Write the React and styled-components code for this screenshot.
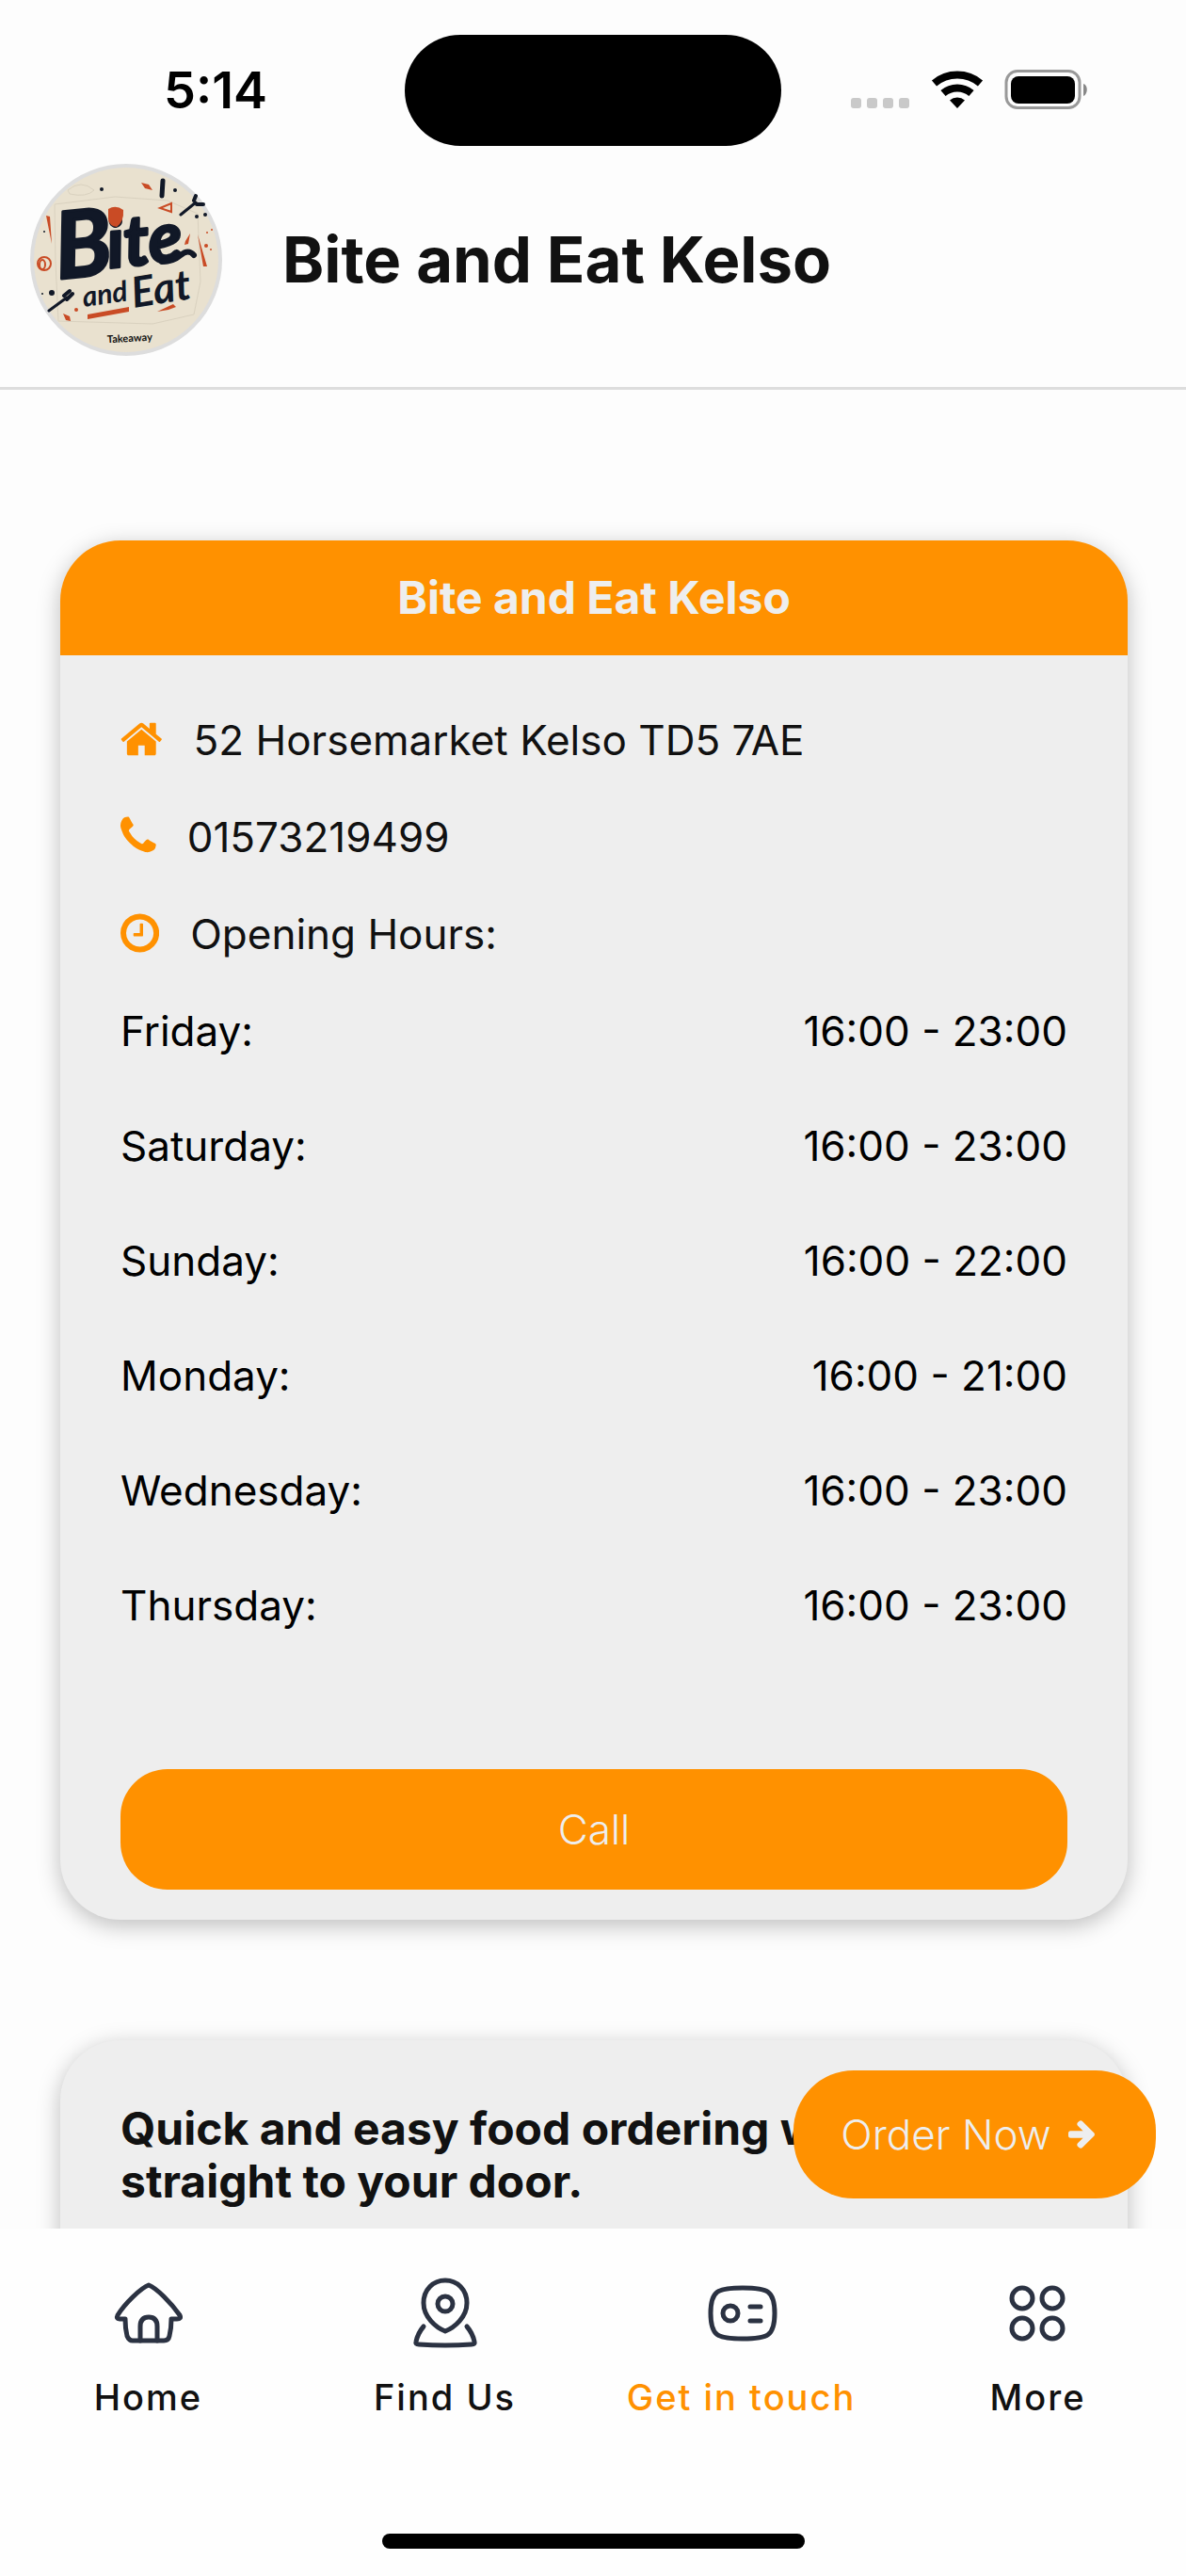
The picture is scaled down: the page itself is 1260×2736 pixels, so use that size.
import React from 'react';
import styled, { createGlobalStyle } from 'styled-components';

const GlobalStyle = createGlobalStyle`
    * {
        box-sizing: border-box;
    }

    body {
        margin: 0;
        background: #fdfdfd;
        color: #111;
        font-family: Inter, 'Liberation Sans', sans-serif;
    }
`;

const Screen = styled.div`
    display: flex;
    flex-direction: column;
    height: 100vh;
    overflow: hidden;
`;

const StatusBar = styled.div`
    display: grid;
    grid-template-columns: 1fr 400px 1fr;
    align-items: center;
    flex: none;
    height: 174px;
    padding: 37px 0 19px;
`;

const Clock = styled.time`
    padding-left: 174px;
    color: #000;
    font-size: 54px;
    font-weight: 600;
    line-height: 64px;
`;

const Island = styled.div`
    height: 118px;
    border-radius: 59px;
    background: #000;
`;

const StatusIcons = styled.div`
    display: flex;
    align-items: center;
    justify-content: flex-end;
    padding: 0 104px 2px 0;
`;

const Header = styled.header`
    display: flex;
    align-items: center;
    flex: none;
    gap: 64px;
    height: 240px;
    padding: 0 32px 33px;
    border-bottom: 3px solid #ddd;
`;

const Logo = styled.svg`
    flex: none;
    width: 204px;
    height: 204px;
`;

const Title = styled.h1`
    margin: 0;
    font-size: 67px;
    font-weight: 700;
    line-height: 84px;
`;

const Content = styled.main`
    position: relative;
    display: flex;
    flex-direction: column;
    flex: 1;
    min-height: 0;
    gap: 128px;
    padding: 160px 62px 0 64px;
    overflow: hidden;
`;

const Card = styled.section`
    flex: none;
    border-radius: 64px;
    background: #eee;
    box-shadow: 0 6px 24px rgba(0, 0, 0, 0.26);
`;

const CardTitle = styled.h2`
    margin: 0;
    border-radius: 64px 64px 0 0;
    background: #ff9100;
    color: #eee;
    font-size: 48px;
    font-weight: 700;
    line-height: 122px;
    text-align: center;
`;

const CardBody = styled.div`
    padding: 39px 64px 32px;
`;

const InfoRow = styled.div`
    display: flex;
    align-items: center;
    gap: 33px;
    font-size: 44px;
    line-height: 103px;

    svg {
        margin-bottom: 4px;
    }
`;

const FaIcon = styled.svg`
    flex: none;
    height: ${(props) => props.$size || 48}px;
    fill: ${(props) => props.$color || '#ff9100'};
`;

const HoursTable = styled.table`
    width: 100%;
    margin-bottom: 103px;
    border-collapse: collapse;
    color: #000;
    font-size: 44px;
    line-height: 102px;

    th,
    td {
        padding: 0 0 20px;
        font-weight: 400;
        text-align: left;
    }

    td {
        text-align: right;
    }
`;

const CallButton = styled.button`
    display: block;
    width: 100%;
    height: 128px;
    border: none;
    border-radius: 50px;
    background: #ff9100;
    color: #eee;
    font-family: inherit;
    font-size: 44px;
    font-weight: 300;
`;

const Promo = styled.p`
    margin: 0;
    padding: 66px 64px 128px;
    font-size: 48px;
    font-weight: 700;
    line-height: 56px;
`;

const OrderButton = styled.button`
    position: absolute;
    right: 32px;
    bottom: 32px;
    display: flex;
    align-items: center;
    justify-content: center;
    gap: 18px;
    width: 385px;
    height: 136px;
    padding: 0 20px 0 6px;
    border: none;
    border-radius: 64px;
    background: #ff9100;
    color: #eee;
    font-family: inherit;
    font-size: 44px;
    font-weight: 300;
`;

const TabBar = styled.nav`
    display: grid;
    grid-template-columns: repeat(4, 1fr);
    flex: none;
    height: 369px;
    background: #fefefe;
`;

const Tab = styled.a`
    display: flex;
    flex-direction: column;
    align-items: center;
    padding-top: 47px;
    color: ${(props) => (props.$active ? '#ff9100' : '#111')};
    font-size: 38px;
    font-weight: 500;
    letter-spacing: 2px;
    line-height: 46px;
    text-decoration: none;

    svg {
        width: 84px;
        height: 84px;
        margin-bottom: 25px;
        fill: none;
        stroke: #2b3242;
        stroke-width: 5;
        stroke-linecap: round;
        stroke-linejoin: round;
    }
`;

const HomeIndicator = styled.div`
    grid-column: 1 / -1;
    align-self: end;
    justify-self: center;
    width: 449px;
    height: 16px;
    margin-bottom: 29px;
    border-radius: 8px;
    background: #000;
`;

const hours = [
    ['Friday:', '16:00 - 23:00'],
    ['Saturday:', '16:00 - 23:00'],
    ['Sunday:', '16:00 - 22:00'],
    ['Monday:', '16:00 - 21:00'],
    ['Wednesday:', '16:00 - 23:00'],
    ['Thursday:', '16:00 - 23:00'],
];

const HomeSolid = () => (
    <FaIcon viewBox="0 0 1664 1792">
        <path d="M1408 992v480q0 26-19 45t-45 19h-384v-384h-256v384h-384q-26 0-45-19t-19-45v-480q0-1 .5-3t.5-3l575-474 575 474q1 2 1 6zm223-69l-62 74q-8 9-21 11h-3q-13 0-21-7l-692-577-692 577q-12 8-24 7-13-2-21-11l-62-74q-8-10-7-23.5t11-21.5l719-599q32-26 76-26t76 26l244 204v-195q0-14 9-23t23-9h192q14 0 23 9t9 23v408l219 182q10 8 11 21.5t-7 23.5z" />
    </FaIcon>
);

const PhoneSolid = () => (
    <FaIcon viewBox="0 0 1408 1792">
        <path d="M1408 1240q0 27-10 70.5t-21 68.5q-21 50-122 106-94 51-186 51-27 0-52.5-3.5t-57.5-12.5-47.5-14.5-55.5-20.5-49-18q-98-35-175-83-128-79-264.5-215.5t-215.5-264.5q-48-77-83-175-3-9-18-49t-20.5-55.5-14.5-47.5-12.5-57.5-3.5-52.5q0-92 51-186 56-101 106-122 25-11 68.5-21t70.5-10q14 0 21 3 18 6 53 76 11 19 30 54t35 63.5 31 53.5q3 4 17.5 25t21.5 35.5 7 28.5q0 20-28.5 50t-62 55-62 53-28.5 46q0 9 5 22.5t8.5 20.5 14 24 11.5 19q76 137 174 235t235 174q2 1 19 11.5t24 14 20.5 8.5 22.5 5q18 0 46-28.5t53-62 55-62 50-28.5q14 0 28.5 7t35.5 21.5 25 17.5q25 15 53.5 31t63.5 35 54 30q70 35 76 53 3 7 3 21z" />
    </FaIcon>
);

const ClockOutline = () => (
    <FaIcon viewBox="0 0 1536 1792">
        <path d="M896 544v448q0 14-9 23t-23 9h-320q-14 0-23-9t-9-23v-64q0-14 9-23t23-9h224v-352q0-14 9-23t23-9h64q14 0 23 9t9 23zm416 352q0-148-73-273t-198-198-273-73-273 73-198 198-73 273 73 273 198 198 273 73 273-73 198-198 73-273zm224 0q0 209-103 385.5t-279.5 279.5-385.5 103-385.5-103-279.5-279.5-103-385.5 103-385.5 279.5-279.5 385.5-103 385.5 103 279.5 279.5 103 385.5z" />
    </FaIcon>
);

const ArrowRight = () => (
    <FaIcon viewBox="0 64 1536 1792" $size={34} $color="#eee">
        <path d="M1472 960q0 54-37 91l-651 651q-39 37-91 37-51 0-90-37l-75-75q-38-38-38-91t38-91l293-293h-704q-52 0-84.5-37.5t-32.5-90.5v-128q0-53 32.5-90.5t84.5-37.5h704l-293-294q-38-36-38-90t38-90l75-75q38-38 90-38 53 0 91 38l651 651q37 35 37 90z" />
    </FaIcon>
);

const SignalIcons = () => (
    <svg width="252" height="44" viewBox="0 0 252 44">
        <g fill="#c9c9c9">
            <rect x="0" y="31" width="11" height="11" rx="3" />
            <rect x="17" y="31" width="11" height="11" rx="3" />
            <rect x="34" y="31" width="11" height="11" rx="3" />
            <rect x="51" y="31" width="11" height="11" rx="3" />
        </g>
        <g fill="none" stroke="#000" strokeWidth="8">
            <path d="M88.500 15.500a38 38 0 0 1 49 0" />
            <path d="M98 26a23 23 0 0 1 30 0" />
        </g>
        <path d="M113 42l-8-8.500a12 12 0 0 1 16 0z" />
        <rect x="165" y="2.500" width="78" height="39" rx="12" fill="none" stroke="#999" strokeWidth="3" />
        <rect x="170" y="8" width="68" height="29" rx="8" />
        <path d="M247 16c5 1 5 11 0 13z" fill="#888" />
    </svg>
);

const BrandLogo = () => (
    <Logo viewBox="0 0 204 204">
        <circle cx="102" cy="102" r="100" fill="#e9e1cf" stroke="#ddd" strokeWidth="4" />
        <g fill="none" stroke="#d9d1bf" strokeWidth="1">
            <path d="M40 28q14-12 28 0q-8 8-26 4zM26 43l64-8 56 4 32 14 3 72-7 35-44 10-100-3-3-62z" />
        </g>
        <g fill="#111827" fontFamily="Lato, sans-serif" fontStyle="italic" fontWeight="700">
            <g stroke="#111827" strokeWidth="3" strokeLinejoin="round" transform="rotate(-6 34 124)">
                <text x="30" y="122" fontSize="98">
                    B
                </text>
                <text x="85" y="116" fontSize="74">
                    ite
                </text>
            </g>
            <text x="57" y="152" fontSize="30" transform="rotate(-8 57 152)">
                and
            </text>
            <text x="110" y="153" fontSize="45" transform="rotate(-9 110 153)">
                Eat
            </text>
        </g>
        {/* swash under the name */}
        <path
            d="M140 104q12 0 20-7q8-7 14 0"
            fill="none"
            stroke="#111827"
            strokeWidth="6"
            strokeLinecap="round"
        />
        <g fill="none" stroke="#111827" strokeLinecap="round">
            <path d="M20 156l19-14M160 54l16-13" strokeWidth="3" />
            <path d="M141 18l-1 16" strokeWidth="5" />
            <path d="M36 140l6-5M39 144l6-6M174 39l2-5M177 43l7 0" strokeWidth="4" />
        </g>
        <g fill="#111827">
            <circle cx="76" cy="27" r="2" />
            <circle cx="154" cy="28" r="2" />
            <circle cx="177" cy="56" r="2" />
            <circle cx="186" cy="54" r="2" />
            <circle cx="23" cy="137" r="3" />
            <circle cx="13" cy="138" r="1" />
            <circle cx="15" cy="72" r="1" />
        </g>
        <g fill="#c94b25">
            <path d="M83 48q8-5 16 1q1 12-7 18q-8-1-9-8z" />
            <path d="M61 160l44-8v5l-44 8z" />
            <path d="M118 20l8 2 4 6-8-2zM135 157l17-8 3 3-8 3zM17 55l4 1 2 29zM178 75l10 34-4 0zM165 82l5-8-2 11-4 1zM35 159l7 3 1 5-5-1z" />
            <circle cx="49" cy="155" r="2" />
            <circle cx="188" cy="73" r="1" />
            <circle cx="193" cy="70" r="1" />
            <circle cx="187" cy="87" r="2" />
            <circle cx="192" cy="91" r="1" />
        </g>
        <g fill="none" stroke="#c94b25" strokeWidth="2">
            <path d="M138 47l12-5 0 9z" />
            <ellipse cx="15" cy="106" rx="7" ry="7" />
            <ellipse cx="13" cy="107" rx="3" ry="5" />
        </g>
        <text
            x="106"
            y="189"
            fill="#111"
            fontFamily="Lato, sans-serif"
            fontSize="11"
            fontWeight="700"
            textAnchor="middle"
            transform="rotate(-3 106 189)"
        >
            Takeaway
        </text>
    </Logo>
);

const TabHome = () => (
    <svg viewBox="0 0 84 84">
        <path d="M42 13C34 16 17 32 9 45q-2 4 2 4h6q0 10 2 18q2 5 6 5h33q5 0 6-5q2-8 2-18h6q5 0 3-4C66 32 50 16 42 13z" />
        <path d="M33 72V57q0-10 9-10t9 10v15" />
    </svg>
);

const TabPin = () => (
    <svg viewBox="0 0 84 84">
        <path d="M42 8c-13 0-23 10-23 24c0 15 13 26 23 30c10-4 23-15 23-30c0-14-10-24-23-24z" />
        <circle cx="42" cy="33" r="8" />
        <path d="M19 57q-6 7-8 16q-1 3 3 3q28 2 56 0q4 0 3-3q-2-9-8-16" />
    </svg>
);

const TabContact = () => (
    <svg viewBox="0 0 84 84">
        <path d="M43 16c27 0 34 3 34 27s-7 27-34 27S9 67 9 43S16 16 43 16z" />
        <circle cx="30" cy="43" r="8" />
        <path d="M51 36h11M51 51h11" />
    </svg>
);

const TabMore = () => (
    <svg viewBox="0 0 84 84">
        <circle cx="25" cy="27" r="11" />
        <circle cx="57" cy="27" r="11" />
        <circle cx="25" cy="59" r="11" />
        <circle cx="57" cy="59" r="11" />
    </svg>
);

const tabs = [
    { label: 'Home', Icon: TabHome },
    { label: 'Find Us', Icon: TabPin },
    { label: 'Get in touch', Icon: TabContact, active: true },
    { label: 'More', Icon: TabMore },
];

const App = () => {
    return (
        <Screen>
            <GlobalStyle />
            <StatusBar>
                <Clock>5:14</Clock>
                <Island />
                <StatusIcons>
                    <SignalIcons />
                </StatusIcons>
            </StatusBar>
            <Header>
                <BrandLogo />
                <Title>Bite and Eat Kelso</Title>
            </Header>
            <Content>
                <Card>
                    <CardTitle>Bite and Eat Kelso</CardTitle>
                    <CardBody>
                        <InfoRow>
                            <HomeSolid />
                            <span>52 Horsemarket Kelso TD5 7AE</span>
                        </InfoRow>
                        <InfoRow>
                            <PhoneSolid />
                            <span>01573219499</span>
                        </InfoRow>
                        <InfoRow>
                            <ClockOutline />
                            <span>Opening Hours:</span>
                        </InfoRow>
                        <HoursTable>
                            <tbody>
                                {hours.map(([day, time]) => (
                                    <tr key={day}>
                                        <th scope="row">{day}</th>
                                        <td>{time}</td>
                                    </tr>
                                ))}
                            </tbody>
                        </HoursTable>
                        <CallButton type="button">Call</CallButton>
                    </CardBody>
                </Card>
                <Card>
                    <Promo>
                        Quick and easy food ordering w
                        <br />
                        straight to your door.
                    </Promo>
                </Card>
                <OrderButton type="button">
                    Order Now
                    <ArrowRight />
                </OrderButton>
            </Content>
            <TabBar>
                {tabs.map(({ label, Icon, active }) => (
                    <Tab key={label} href="#" $active={active}>
                        <Icon />
                        {label}
                    </Tab>
                ))}
                <HomeIndicator />
            </TabBar>
        </Screen>
    );
};

export default App;
